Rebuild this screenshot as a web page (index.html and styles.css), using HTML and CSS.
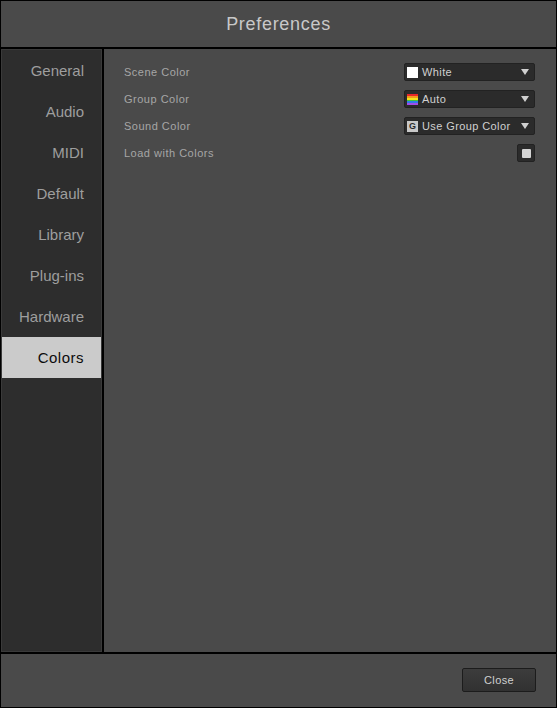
FILE: index.html
```html
<!DOCTYPE html>
<html lang="en">
<head>
    <meta charset="UTF-8">
    <title>Preferences</title>
    <link rel="stylesheet" href="styles.css">
</head>
<body>
    <div class="window">
        <div class="title-bar">Preferences</div>

        <div class="main">
            <div class="sidebar">
                <div class="tab">General</div>
                <div class="tab">Audio</div>
                <div class="tab">MIDI</div>
                <div class="tab">Default</div>
                <div class="tab">Library</div>
                <div class="tab">Plug-ins</div>
                <div class="tab">Hardware</div>
                <div class="tab active">Colors</div>
            </div>

            <div class="content">
                <div class="row">
                    <span class="label">Scene Color</span>
                    <div class="select">
                        <span class="swatch white"></span>
                        <span class="value">White</span>
                        <span class="arrow"></span>
                    </div>
                </div>
                <div class="row">
                    <span class="label">Group Color</span>
                    <div class="select">
                        <span class="swatch rainbow"></span>
                        <span class="value">Auto</span>
                        <span class="arrow"></span>
                    </div>
                </div>
                <div class="row">
                    <span class="label">Sound Color</span>
                    <div class="select">
                        <span class="swatch group">G</span>
                        <span class="value">Use Group Color</span>
                        <span class="arrow"></span>
                    </div>
                </div>
                <div class="row">
                    <span class="label">Load with Colors</span>
                    <div class="checkbox"><span class="check"></span></div>
                </div>
            </div>
        </div>

        <div class="footer">
            <button class="btn">Close</button>
        </div>
    </div>
</body>
</html>
```

FILE: styles.css
```css
body {
    margin: 0;
    background-color: #000;
    font-family: "Liberation Sans", Arial, sans-serif;
}
.window {
    width: 557px;
    height: 708px;
    box-sizing: border-box;
    border: 1px solid #000;
    display: flex;
    flex-direction: column;
    gap: 2px;
    background-color: #000;
}
.title-bar {
    height: 46px;
    background-color: #4a4a4a;
    color: #c8c8c8;
    font-size: 18px;
    letter-spacing: 0.7px;
    display: flex;
    align-items: center;
    justify-content: center;
    padding-top: 1px;
    box-sizing: border-box;
}
.main {
    flex: 1;
    display: flex;
    gap: 2px;
}
.sidebar {
    width: 101px;
    box-sizing: border-box;
    background-color: #2d2d2d;
    border: 1px solid #3a3a3a;
    display: flex;
    flex-direction: column;
}
.tab {
    height: 41px;
    display: flex;
    align-items: center;
    justify-content: flex-end;
    padding-right: 17px;
    font-size: 15px;
    color: #9e9e9e;
}
.tab.active {
    background-color: #cbcbcb;
    color: #0c0c0c;
    letter-spacing: 0.5px;
}
.content {
    flex: 1;
    background-color: #4a4a4a;
    padding: 14px 21px 0 20px;
    display: flex;
    flex-direction: column;
    gap: 9px;
}
.row {
    height: 18px;
    display: flex;
    align-items: center;
    justify-content: space-between;
}
.label {
    font-size: 11px;
    letter-spacing: 0.5px;
    color: #a6a6a6;
}
.select {
    width: 131px;
    height: 18px;
    box-sizing: border-box;
    background-color: #2b2b2b;
    border: 1px solid #222;
    border-radius: 2px;
    display: flex;
    align-items: center;
    padding: 0 5px 0 2px;
    gap: 4px;
}
.swatch {
    width: 11px;
    height: 11px;
    flex-shrink: 0;
}
.swatch.white {
    background-color: #fff;
}
.swatch.rainbow {
    background: linear-gradient(#e8262a 0 17%, #f39a1c 17% 34%, #f2e41c 34% 50%, #3fc43a 50% 67%, #2f7be8 67% 84%, #a24de6 84%);
}
.swatch.group {
    background-color: #c8c8c8;
    color: #2b2b2b;
    font-size: 9px;
    font-weight: bold;
    line-height: 11px;
    text-align: center;
}
.value {
    flex: 1;
    font-size: 11px;
    letter-spacing: 0.4px;
    color: #d0d0d0;
}
.arrow {
    width: 0;
    height: 0;
    border-left: 4px solid transparent;
    border-right: 4px solid transparent;
    border-top: 6px solid #d0d0d0;
}
.checkbox {
    width: 18px;
    height: 18px;
    box-sizing: border-box;
    background-color: #2b2b2b;
    border: 1px solid #222;
    border-radius: 2px;
    display: flex;
    align-items: center;
    justify-content: center;
}
.check {
    width: 9px;
    height: 9px;
    background-color: #d4d4d4;
    border-radius: 1px;
}
.footer {
    height: 53px;
    background-color: #4a4a4a;
    display: flex;
    justify-content: flex-end;
    align-items: flex-start;
    padding: 14px 20px 0 0;
    box-sizing: border-box;
}
.btn {
    width: 74px;
    height: 24px;
    background: linear-gradient(#3c3c3c, #313131);
    border: 1px solid #1c1c1c;
    border-radius: 2px;
    color: #cfcfcf;
    font-family: "Liberation Sans", Arial, sans-serif;
    font-size: 11px;
    letter-spacing: 0.4px;
    padding: 0;
}
```
